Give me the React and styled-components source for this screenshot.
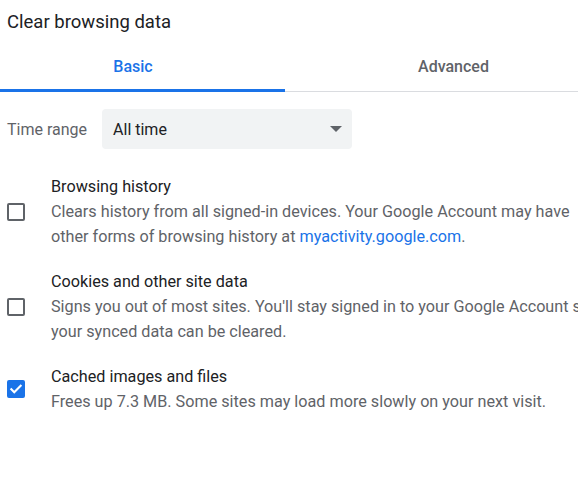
import React from "react";
import styled, { createGlobalStyle } from "styled-components";

const GlobalStyle = createGlobalStyle`
  html, body {
    margin: 0;
    padding: 0;
    background: #fff;
  }
  body {
    font-family: Roboto, "Liberation Sans", Arial, sans-serif;
    color: #202124;
    -webkit-font-smoothing: antialiased;
  }
`;

const Dialog = styled.div`
  width: 578px;
  height: 477px;
  overflow: hidden;
  background: #fff;
`;

const Title = styled.h1`
  margin: 0;
  padding-left: 7px;
  height: 44px;
  line-height: 44px;
  font-size: 18.5px;
  font-weight: 400;
  color: #202124;
  white-space: nowrap;
`;

const Tabs = styled.div`
  display: flex;
  height: 47px;
  border-bottom: 1px solid #dadce0;
`;

const Tab = styled.div`
  box-sizing: border-box;
  flex: ${(p) => (p.grow ? "1" : "0 0 285px")};
  display: flex;
  align-items: center;
  justify-content: center;
  padding-left: ${(p) => p.shiftLeft || 0}px;
  padding-right: ${(p) => p.shiftRight || 0}px;
  font-size: 16px;
  font-weight: 500;
  color: ${(p) => (p.active ? "#1a73e8" : "#5f6368")};
  border-bottom: 3px solid ${(p) => (p.active ? "#1a73e8" : "transparent")};
  margin-bottom: -1px;
`;

const Body = styled.div`
  padding: 17px 0 0 7px;
`;

const RangeRow = styled.div`
  display: flex;
  align-items: center;
  gap: 15px;
  font-size: 16px;
`;

const RangeLabel = styled.span`
  color: #5f6368;
`;

const Select = styled.div`
  box-sizing: border-box;
  width: 250px;
  height: 40px;
  display: flex;
  align-items: center;
  justify-content: space-between;
  padding: 0 10px 0 11px;
  background: #f1f3f4;
  border-radius: 4px;
  color: #202124;
`;

const Caret = styled.span`
  width: 0;
  height: 0;
  border-left: 6px solid transparent;
  border-right: 6px solid transparent;
  border-top: 6px solid #5f6368;
`;

const List = styled.div`
  display: flex;
  flex-direction: column;
  gap: 20px;
  margin-top: 25px;
`;

const Item = styled.div`
  display: flex;
  align-items: center;
  gap: 26px;
`;

const Box = styled.span`
  box-sizing: border-box;
  flex: 0 0 18px;
  height: 18px;
  border-radius: 2px;
  border: 2px solid ${(p) => (p.checked ? "#1a73e8" : "#5f6368")};
  background: ${(p) => (p.checked ? "#1a73e8" : "transparent")};
  display: flex;
  align-items: center;
  justify-content: center;
`;

const Text = styled.div`
  font-size: 16.2px;
  line-height: 25px;
  white-space: nowrap;
`;

const ItemTitle = styled.div`
  color: #202124;
`;

const ItemDesc = styled.div`
  color: #5f6368;
`;

const Link = styled.a`
  color: #1a73e8;
  text-decoration: none;
`;

const Check = () => (
  <svg width="14" height="14" viewBox="0 0 24 24">
    <path
      d="M4 12.5l5 5L20 6.5"
      fill="none"
      stroke="#fff"
      strokeWidth="3.6"
      strokeLinecap="square"
    />
  </svg>
);

const items = [
  {
    title: "Browsing history",
    desc: [
      "Clears history from all signed-in devices. Your Google Account may have",
      <>
        other forms of browsing history at{" "}
        <Link href="#">myactivity.google.com</Link>.
      </>,
    ],
    checked: false,
  },
  {
    title: "Cookies and other site data",
    desc: [
      "Signs you out of most sites. You'll stay signed in to your Google Account so",
      "your synced data can be cleared.",
    ],
    checked: false,
  },
  {
    title: "Cached images and files",
    desc: ["Frees up 7.3 MB. Some sites may load more slowly on your next visit."],
    checked: true,
  },
];

export default function App() {
  return (
    <Dialog>
      <GlobalStyle />
      <Title>Clear browsing data</Title>
      <Tabs>
        <Tab active shiftRight={19}>
          Basic
        </Tab>
        <Tab grow shiftLeft={44}>
          Advanced
        </Tab>
      </Tabs>
      <Body>
        <RangeRow>
          <RangeLabel>Time range</RangeLabel>
          <Select>
            All time
            <Caret />
          </Select>
        </RangeRow>
        <List>
          {items.map((item, i) => (
            <Item key={i}>
              <Box checked={item.checked}>{item.checked && <Check />}</Box>
              <Text>
                <ItemTitle>{item.title}</ItemTitle>
                {item.desc.map((line, j) => (
                  <ItemDesc key={j}>{line}</ItemDesc>
                ))}
              </Text>
            </Item>
          ))}
        </List>
      </Body>
    </Dialog>
  );
}
